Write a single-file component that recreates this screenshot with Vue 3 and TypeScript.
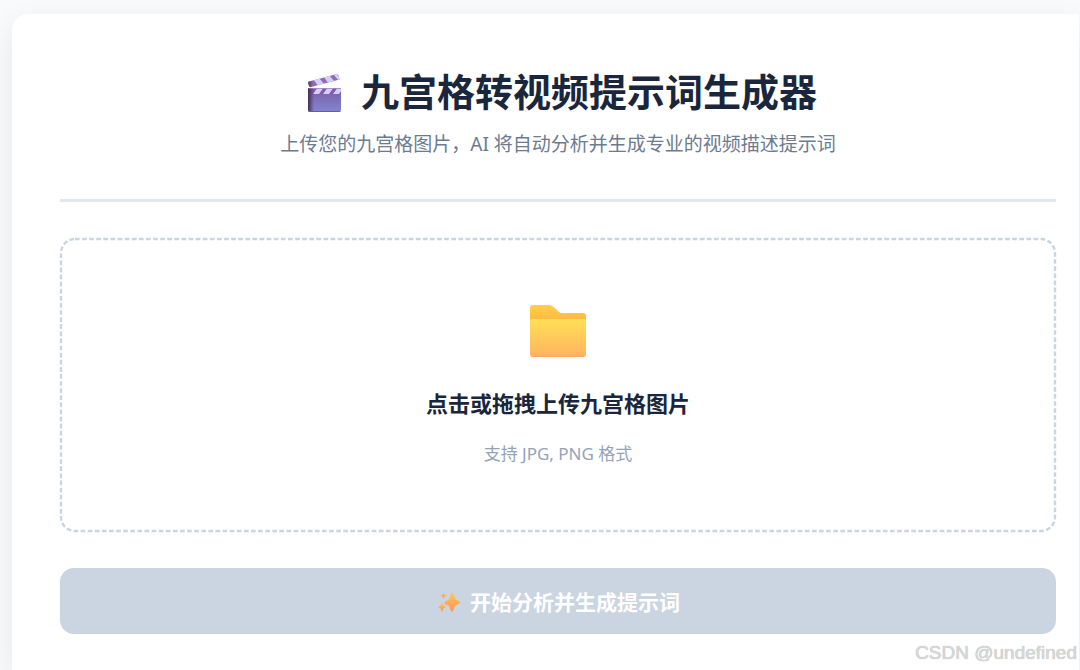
<script setup lang="ts">
import { ref } from 'vue'

const title = '九宫格转视频提示词生成器'
const subtitle = '上传您的九宫格图片，AI 将自动分析并生成专业的视频描述提示词'
const file = ref<File | null>(null)

function onPick(event: Event) {
  file.value = (event.target as HTMLInputElement).files?.[0] ?? null
}

function onDrop(event: DragEvent) {
  file.value = event.dataTransfer?.files[0] ?? null
}
</script>

<template>
  <div class="page">
    <main class="card">
      <header class="header">
        <h1 class="title">
          <svg class="clapper" viewBox="-6 -4 44 42" aria-hidden="true">
            <defs>
              <linearGradient id="board" x1="0" y1="0" x2="0" y2="1">
                <stop offset="0" stop-color="#7c5ba3" />
                <stop offset="1" stop-color="#8286d2" />
              </linearGradient>
              <linearGradient id="side" x1="0" y1="0" x2="1" y2="0">
                <stop offset="0" stop-color="#40304f" />
                <stop offset="1" stop-color="#40304f" stop-opacity="0" />
              </linearGradient>
              <clipPath id="arm"><path d="M4 7.500 31 .3Q33 0 33.500 1.500L34.500 5.500 6 13Q4.500 13.500 4 12L3 9Q3 8 4 7.500Z" /></clipPath>
              <clipPath id="base"><path d="M3 14.500H36V35.500Q36 38 34 38H5.500Q3 38 3 35.500Z" /></clipPath>
            </defs>
            <g clip-path="url(#arm)">
              <path d="M0 0H38V18H0Z" fill="#8e6bb5" />
              <path d="M8 5 14 4 20 11 14 13ZM18 2 24 1 30 8 24 10ZM28 0 34 0 40 6 34 7Z" fill="#d3ceff" />
              <path d="M2 5H8V16H2Z" fill="url(#side)" />
            </g>
            <g clip-path="url(#base)">
              <path d="M3 14H36V38H3Z" fill="url(#board)" />
              <path d="M3 14H36V20H3Z" fill="#8658ac" />
              <path d="M12 14.500H18L14 20H8ZM22 14.500H28L24 20H18ZM32 14.500H38L34 20H28Z" fill="#d3ceff" />
              <path d="M3 14H9V38H3Z" fill="url(#side)" />
              <path d="M3 37H36V38H3Z" fill="#6c5aa0" />
            </g>
          </svg>
          <span>{{ title }}</span>
        </h1>
        <p class="subtitle">{{ subtitle }}</p>
      </header>

      <label class="dropzone" @dragover.prevent @drop.prevent="onDrop">
        <svg class="outline" aria-hidden="true">
          <rect width="100%" height="100%" rx="14" />
        </svg>
        <input class="picker" type="file" accept="image/png,image/jpeg" @change="onPick" />
        <svg class="folder" viewBox="0 0 58 54" aria-hidden="true">
          <defs>
            <linearGradient id="back" x1="0" y1="0" x2="0" y2="1">
              <stop offset="0" stop-color="#ffcf4e" />
              <stop offset=".5" stop-color="#ffba3e" />
            </linearGradient>
            <linearGradient id="front" x1="0" y1="0" x2="0" y2="1">
              <stop offset="0" stop-color="#ffe055" />
              <stop offset=".9" stop-color="#ffb860" />
              <stop offset="1" stop-color="#ffa66c" />
            </linearGradient>
          </defs>
          <path d="M1 4Q1 1 4 1H20Q22 1 24 2.500L30 8Q31 9 33 9H54Q57 9 57 12V30H1Z" fill="url(#back)" />
          <path d="M1 17Q1 15 3 15H55Q57 15 57 17V50Q57 53 54 53H4Q1 53 1 50Z" fill="url(#front)" />
        </svg>
        <span class="drop-title">点击或拖拽上传九宫格图片</span>
        <span class="drop-hint">支持 JPG, PNG 格式</span>
      </label>

      <button class="submit" type="button" :disabled="!file">
        <svg class="sparkles" viewBox="-3 -2 24 24" aria-hidden="true">
          <defs>
            <linearGradient id="spark" x1="0" y1="0" x2="0" y2="1">
              <stop offset="0" stop-color="#ffc84f" />
              <stop offset="1" stop-color="#ff9262" />
            </linearGradient>
          </defs>
          <g fill="url(#spark)">
            <path d="M12 1.500Q13 0 14 1.500L16.500 7 20.500 9.500Q21.500 10.500 20.500 11.500L16.500 13.500 14 19Q13 20.500 12 19L10 14 6 12Q4.500 11 6 9.500L10 7.500Z" />
            <path d="M4.500 0 5.500 2.500 8 3.500 5.500 4.500 4.500 7 3.500 4.500 1 3.500 3.500 2.500Z" />
            <path d="M3 10 4.500 13.500 7 15 4.500 16.500 3 20 1.500 16.500 -1 15 1.500 13.500Z" />
          </g>
        </svg>
        <span>开始分析并生成提示词</span>
      </button>
    </main>
    <div class="watermark">CSDN @undefined</div>
  </div>
</template>

<style>
body {
  margin: 0;
  background: #f8fafc;
}
</style>

<style scoped>
.page {
  box-sizing: border-box;
  display: flex;
  min-height: 100vh;
  padding: 14px 1px 0 12px;
  overflow: hidden;
  background: #f8fafc;
  font-family: "Noto Sans", "Noto Sans CJK SC", sans-serif;
}

.card {
  flex: 1;
  padding: 48px 23px 36px 48px;
  border-radius: 16px 0 0 0;
  background: #fff;
  box-shadow: 0 10px 30px rgba(0, 0, 0, 0.08);
}

.header {
  padding-bottom: 41px;
  border-bottom: 3px solid #e2e8f0;
  text-align: center;
}

.title {
  display: flex;
  align-items: center;
  justify-content: center;
  gap: 18px;
  margin: 0;
  color: #1a263b;
  font-size: 38px;
  font-weight: 700;
  line-height: 58px;
}

.clapper {
  width: 44px;
  height: 42px;
}

.subtitle {
  margin: 10px 0 0;
  color: #6b7b91;
  font-size: 19px;
  line-height: 28px;
}

.dropzone {
  position: relative;
  display: flex;
  flex-direction: column;
  align-items: center;
  margin-top: 36px;
  padding: 66px 24px 64px;
  cursor: pointer;
}

.outline {
  position: absolute;
  top: 1px;
  left: 1px;
  width: calc(100% - 2px);
  height: calc(100% - 2px);
  overflow: visible;
}

.outline rect {
  fill: none;
  stroke: #cbd5e1;
  stroke-width: 2.4;
  stroke-dasharray: 4.7 2.4;
}

.picker {
  position: absolute;
  width: 1px;
  height: 1px;
  opacity: 0;
}

.folder {
  width: 58px;
  height: 54px;
}

.drop-title {
  margin-top: 27px;
  color: #1a263b;
  font-size: 22px;
  font-weight: 700;
  line-height: 36px;
}

.drop-hint {
  margin-top: 19px;
  color: #94a3b8;
  font-size: 17px;
  line-height: 28px;
}

.submit {
  display: flex;
  align-items: center;
  justify-content: center;
  gap: 10px;
  width: 100%;
  margin-top: 36px;
  padding: 19px 24px 17px;
  border: 0;
  border-radius: 14px;
  background: #cbd5e1;
  color: #fff;
  font-family: inherit;
  font-size: 21px;
  font-weight: 700;
  line-height: 30px;
}

.sparkles {
  width: 24px;
  height: 24px;
}

.watermark {
  position: absolute;
  right: 3px;
  bottom: 5px;
  color: #d8d8d8;
  font-family: "Liberation Sans", sans-serif;
  font-size: 19px;
  line-height: 24px;
  text-shadow: 0 0 1px #aaa;
}
</style>
